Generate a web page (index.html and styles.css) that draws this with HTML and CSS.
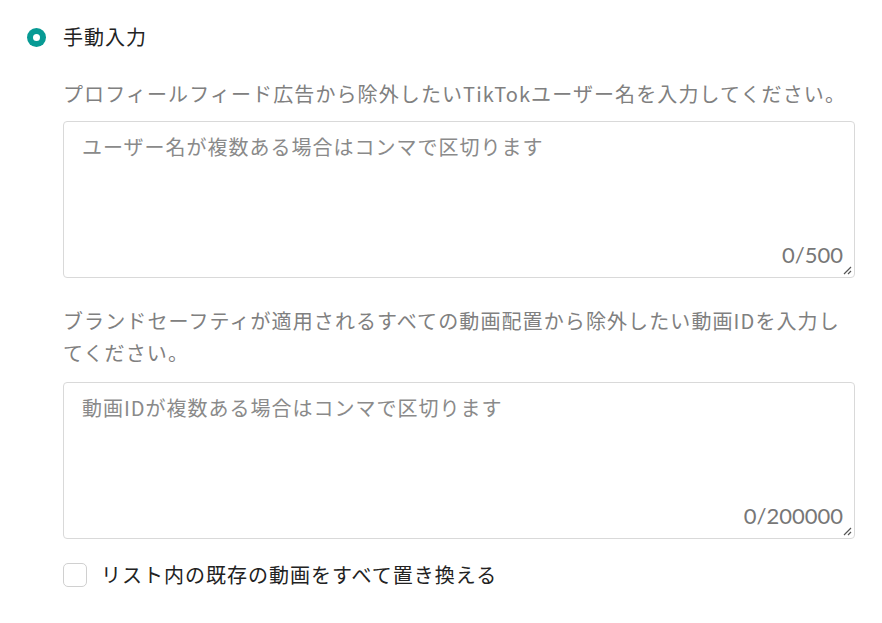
FILE: index.html
```html
<!DOCTYPE html>
<html lang="ja">
<head>
<meta charset="utf-8">
<link rel="stylesheet" href="styles.css">
</head>
<body>
<div class="page">
  <label class="radio-row">
    <span class="radio"><span class="radio-dot"></span></span>
    <span class="radio-label">手動入力</span>
  </label>
  <div class="section">
    <p class="desc">プロフィールフィード広告から除外したいTikTokユーザー名を入力してください。</p>
    <div class="field">
      <div class="placeholder">ユーザー名が複数ある場合はコンマで区切ります</div>
      <div class="counter">0/500</div>
      <svg class="grip" width="9" height="9" viewBox="0 0 9 9"><path d="M1 8 L8 1 M5 8 L8 5" stroke="#555" stroke-width="1.2" fill="none"/></svg>
    </div>
    <p class="desc desc2">ブランドセーフティが適用されるすべての動画配置から除外したい動画IDを入力してください。</p>
    <div class="field field2">
      <div class="placeholder">動画IDが複数ある場合はコンマで区切ります</div>
      <div class="counter">0/200000</div>
      <svg class="grip" width="9" height="9" viewBox="0 0 9 9"><path d="M1 8 L8 1 M5 8 L8 5" stroke="#555" stroke-width="1.2" fill="none"/></svg>
    </div>
    <label class="check-row">
      <span class="checkbox"></span>
      <span class="check-label">リスト内の既存の動画をすべて置き換える</span>
    </label>
  </div>
</div>
</body>
</html>
```
FILE: styles.css
```css
html, body {
  margin: 0;
  padding: 0;
  background: #fff;
}
body {
  font-family: "Noto Sans CJK JP", "Noto Sans", sans-serif;
  color: #222;
}
.page {
  padding: 26px 27px 0 27px;
  width: 828px;
}
.radio-row {
  display: flex;
  align-items: center;
  gap: 17px;
  height: 22px;
}
.radio {
  width: 19px;
  height: 19px;
  border-radius: 50%;
  background: #079a94;
  display: flex;
  align-items: center;
  justify-content: center;
  flex: none;
}
.radio-dot {
  width: 7px;
  height: 7px;
  border-radius: 50%;
  background: #fff;
}
.radio-label {
  font-size: 20px;
  line-height: 22px;
  letter-spacing: 1px;
  color: #222;
}
.section {
  padding-left: 36px;
}
.desc {
  margin: 0;
  font-size: 20px;
  line-height: 32px;
  letter-spacing: 1.1px;
  color: #808080;
}
.section > .desc:first-child {
  margin-top: 30px;
}
.desc2 {
  margin-top: 27px;
}
.field {
  position: relative;
  margin-top: 11px;
  height: 155px;
  border: 1px solid #d9d9d9;
  border-radius: 4px;
}
.field2 {
  margin-top: 13px;
}
.placeholder {
  padding: 9px 18px;
  font-size: 20px;
  line-height: 32px;
  letter-spacing: 1px;
  color: #8a8a8a;
}
.counter {
  position: absolute;
  right: 11px;
  bottom: 9px;
  font-size: 22px;
  line-height: 26px;
  color: #777;
  font-family: "Lato", "Noto Sans CJK JP", sans-serif;
}
.grip {
  position: absolute;
  right: 2px;
  bottom: 2px;
}
.check-row {
  display: flex;
  align-items: center;
  gap: 14px;
  margin-top: 22px;
}
.checkbox {
  width: 22px;
  height: 22px;
  border: 1px solid #d0d0d0;
  border-radius: 5px;
  flex: none;
}
.check-label {
  font-size: 20px;
  line-height: 28px;
  letter-spacing: 1px;
  color: #222;
}
```
